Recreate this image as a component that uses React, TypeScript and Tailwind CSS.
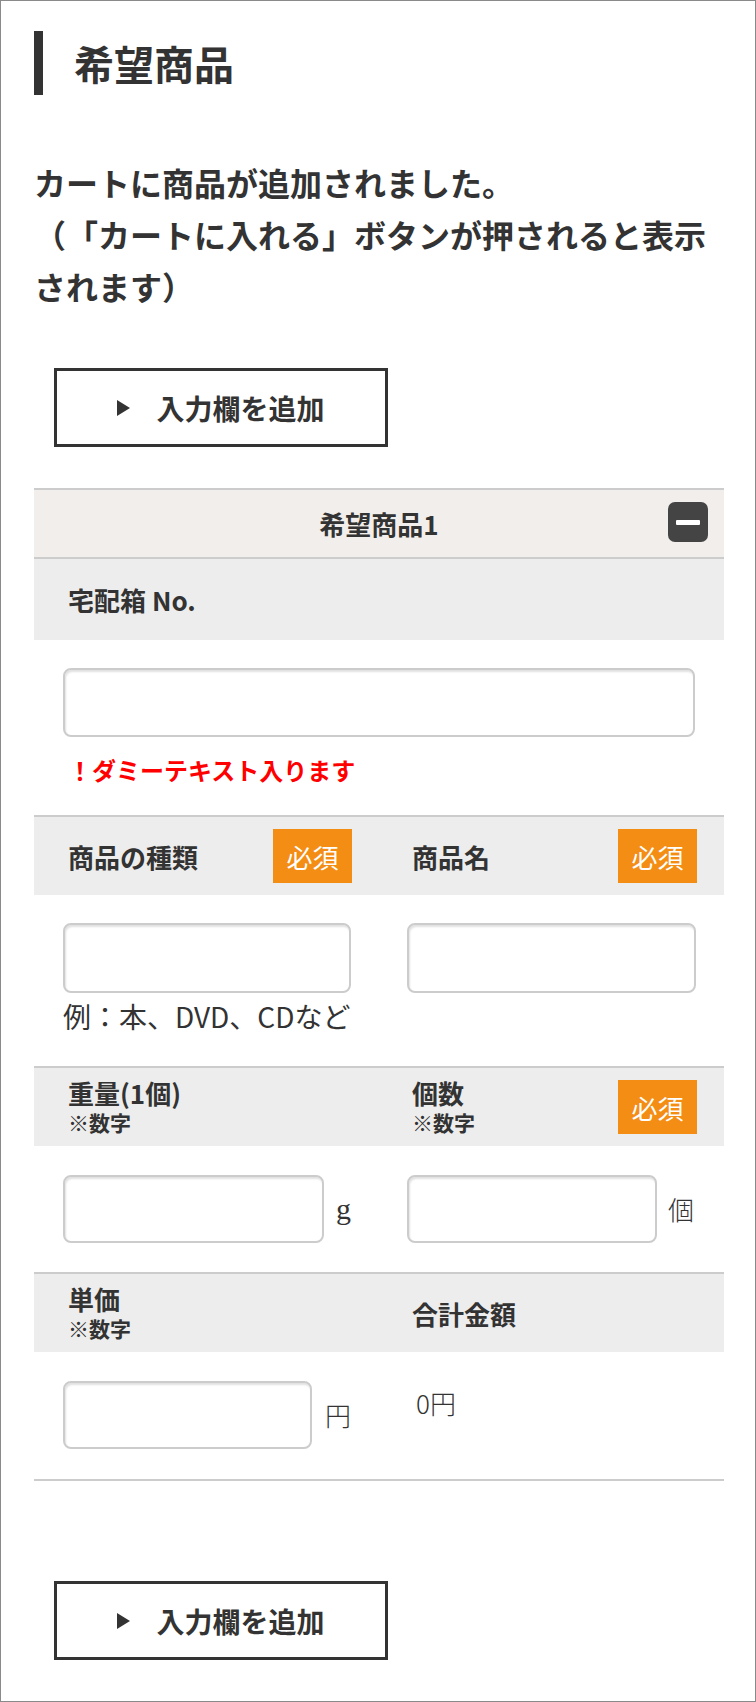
import { FC } from 'react';

const Badge: FC = () => (
  <span className="flex h-[54px] w-[79px] items-center justify-center bg-[#f48d14] text-[26px] font-normal text-white">
    必須
  </span>
);

const Field: FC<{ className: string }> = ({ className }) => (
  <input
    type="text"
    className={`${className} rounded-[8px] border-2 border-[#cccccc] bg-white shadow-[inset_1px_2px_2px_rgba(0,0,0,0.12)] outline-none`}
  />
);

const AddButton: FC = () => (
  <button className="ml-[20px] flex h-[79px] w-[334px] items-center justify-center gap-[26px] border-[3px] border-[#333333] bg-white">
    <svg width="13" height="16" viewBox="0 0 13 16">
      <polygon points="0,0 13,8 0,16" fill="#333333" />
    </svg>
    <span className="text-[28px] font-bold leading-none">入力欄を追加</span>
  </button>
);

const App: FC = () => {
  return (
    <div className="h-[1702px] w-[756px] border border-[#8a8a8a] bg-white pl-[33px] pt-[30px] font-['Noto_Sans_CJK_JP',sans-serif] text-[#333333] [text-spacing-trim:space-all]">
      <div className="flex h-[64px] items-center">
        <div className="h-[64px] w-[9px] bg-[#333333]" />
        <h1 className="ml-[31px] text-[40px] font-bold leading-none">希望商品</h1>
      </div>

      <p className="mt-[61px] w-[690px] text-[32px] font-bold leading-[52px]">
        カートに商品が追加されました。
        <br />
        （「カートに入れる」ボタンが押されると表示されます）
      </p>

      <div className="mt-[56px]">
        <AddButton />
      </div>

      <div className="mt-[41px] w-[690px] border-b-2 border-[#cccccc]">
        <div className="relative flex h-[71px] items-center justify-center border-y-2 border-[#cccccc] bg-[#f2eeeb]">
          <span className="text-[26px] font-bold">希望商品1</span>
          <div className="absolute right-[16px] top-[12px] flex h-[40px] w-[40px] items-center justify-center rounded-[7px] bg-[#444444]">
            <div className="h-[5px] w-[24px] rounded-[1px] bg-white" />
          </div>
        </div>

        <div className="flex h-[81px] items-center bg-[#ededed] pl-[34px]">
          <span className="text-[26px] font-bold">宅配箱 No.</span>
        </div>
        <div className="pb-[28px] pt-[28px]">
          <Field className="ml-[29px] h-[69px] w-[632px]" />
          <p className="mt-[16px] pl-[34px] text-[24px] font-bold leading-[34px] text-[#ff0000]">
            ！ダミーテキスト入ります
          </p>
        </div>

        <div className="grid h-[80px] grid-cols-2 border-t-2 border-[#cccccc] bg-[#ededed]">
          <div className="flex items-center justify-between pl-[34px] pr-[27px]">
            <span className="text-[26px] font-bold">商品の種類</span>
            <Badge />
          </div>
          <div className="flex items-center justify-between pl-[33px] pr-[27px]">
            <span className="text-[26px] font-bold">商品名</span>
            <Badge />
          </div>
        </div>
        <div className="grid grid-cols-2 pb-[32px] pt-[28px]">
          <div className="pl-[29px]">
            <Field className="h-[70px] w-[288px]" />
            <p className="mt-[5px] text-[28px] leading-[36px]">例：本、DVD、CDなど</p>
          </div>
          <div className="pl-[28px]">
            <Field className="h-[70px] w-[289px]" />
          </div>
        </div>

        <div className="grid h-[80px] grid-cols-2 border-t-2 border-[#cccccc] bg-[#ededed]">
          <div className="flex items-center pl-[34px] pr-[27px]">
            <div className="font-bold">
              <div className="text-[26px] leading-[30px]">重量(1個)</div>
              <div className="text-[21px] leading-[28px]">※数字</div>
            </div>
          </div>
          <div className="flex items-center justify-between pl-[33px] pr-[27px]">
            <div className="font-bold">
              <div className="text-[26px] leading-[30px]">個数</div>
              <div className="text-[21px] leading-[28px]">※数字</div>
            </div>
            <Badge />
          </div>
        </div>
        <div className="grid grid-cols-2 pb-[29px] pt-[29px]">
          <div className="flex items-center gap-[12px] pl-[29px]">
            <Field className="h-[68px] w-[261px]" />
            <span className="font-['Liberation_Serif',serif] text-[30px] leading-none">g</span>
          </div>
          <div className="flex items-center gap-[11px] pl-[28px]">
            <Field className="h-[68px] w-[250px]" />
            <span className="text-[26px] font-light leading-none">個</span>
          </div>
        </div>

        <div className="grid h-[80px] grid-cols-2 border-t-2 border-[#cccccc] bg-[#ededed]">
          <div className="flex items-center pl-[34px] pr-[27px]">
            <div className="font-bold">
              <div className="text-[26px] leading-[30px]">単価</div>
              <div className="text-[21px] leading-[28px]">※数字</div>
            </div>
          </div>
          <div className="flex items-center pl-[33px] pr-[27px]">
            <span className="text-[26px] font-bold">合計金額</span>
          </div>
        </div>
        <div className="grid grid-cols-2 pb-[30px] pt-[29px]">
          <div className="flex items-center gap-[13px] pl-[29px]">
            <Field className="h-[68px] w-[249px]" />
            <span className="text-[26px] font-light leading-none">円</span>
          </div>
          <div className="pl-[37px]">
            <p className="mt-[4px] text-[26px] font-light leading-[36px]">0円</p>
          </div>
        </div>
      </div>

      <div className="mt-[100px]">
        <AddButton />
      </div>
    </div>
  );
};

export default App;
